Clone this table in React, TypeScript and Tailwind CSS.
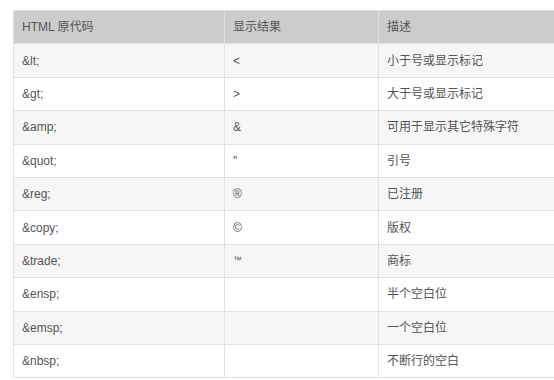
const rows: [string, string, string][] = [
  ['&lt;', '<', '小于号或显示标记'],
  ['&gt;', '>', '大于号或显示标记'],
  ['&amp;', '&', '可用于显示其它特殊字符'],
  ['&quot;', '"', '引号'],
  ['&reg;', '®', '已注册'],
  ['&copy;', '©', '版权'],
  ['&trade;', '™', '商标'],
  ['&ensp;', '', '半个空白位'],
  ['&emsp;', '', '一个空白位'],
  ['&nbsp;', '', '不断行的空白'],
]

const font = "font-['Liberation_Sans','Noto_Sans_CJK_SC',sans-serif]"
const cell = 'border border-[#e0e0e0] px-2 h-[33.4px] align-middle'

export default function App() {
  return (
    <div className={`w-[554px] h-[380px] bg-white overflow-hidden pt-[10px] pl-[13px] ${font}`}>
      <table className="w-[560px] table-fixed border-collapse text-[12px] text-[#555]">
        <colgroup>
          <col className="w-[211px]" />
          <col className="w-[154px]" />
          <col />
        </colgroup>
        <thead>
          <tr className="bg-[#cccccc]">
            <th className={`${cell} border-[#d6d6d6] text-left font-normal`}>HTML 原代码</th>
            <th className={`${cell} border-[#d6d6d6] text-left font-normal`}>显示结果</th>
            <th className={`${cell} border-[#d6d6d6] text-left font-normal`}>描述</th>
          </tr>
        </thead>
        <tbody>
          {rows.map(([code, result, desc], i) => (
            <tr key={code} className={i % 2 === 0 ? 'bg-[#f6f6f6]' : 'bg-white'}>
              <td className={cell}>{code}</td>
              <td className={`${cell} ${result === '™' ? 'text-[9px]' : ''}`}>{result}</td>
              <td className={cell}>{desc}</td>
            </tr>
          ))}
        </tbody>
      </table>
    </div>
  )
}
